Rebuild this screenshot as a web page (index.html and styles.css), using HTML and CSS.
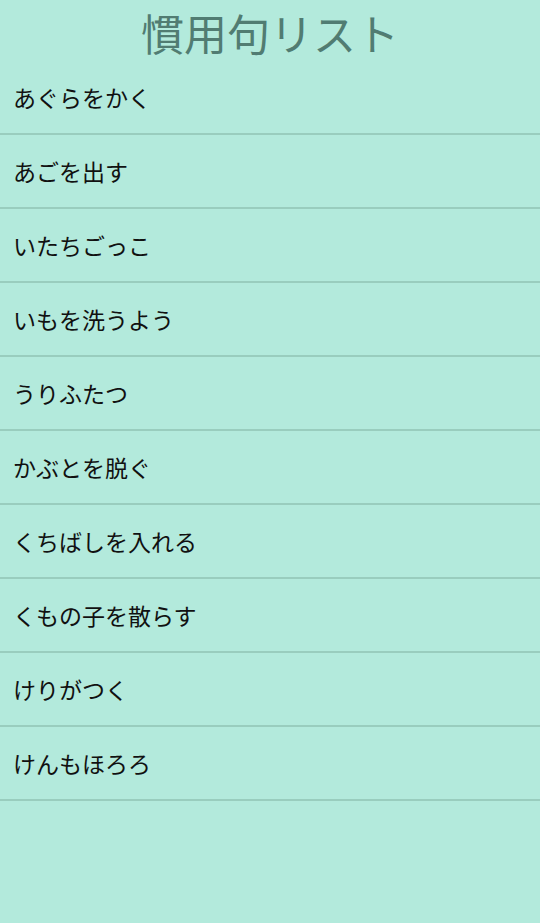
FILE: index.html
```html
<!DOCTYPE html>
<html lang="ja">
<head>
<meta charset="utf-8">
<link rel="stylesheet" href="styles.css">
</head>
<body>
<h1 class="title">慣用句リスト</h1>
<ul class="list">
<li class="item">あぐらをかく</li>
<li class="item">あごを出す</li>
<li class="item">いたちごっこ</li>
<li class="item">いもを洗うよう</li>
<li class="item">うりふたつ</li>
<li class="item">かぶとを脱ぐ</li>
<li class="item">くちばしを入れる</li>
<li class="item">くもの子を散らす</li>
<li class="item">けりがつく</li>
<li class="item">けんもほろろ</li>
</ul>
</body>
</html>
```
FILE: styles.css
```css
html, body {
  margin: 0;
  padding: 0;
  background: #b3eadc;
  min-height: 100%;
}
body {
  font-family: "Noto Sans CJK JP", "Noto Sans", sans-serif;
  width: 540px;
  height: 923px;
}
.title {
  margin: 0;
  height: 61px;
  line-height: 64px;
  text-align: center;
  font-size: 43px;
  font-weight: 400;
  color: #517c72;
}
.list {
  list-style: none;
  margin: 0;
  padding: 0;
}
.item {
  height: 72px;
  line-height: 72px;
  padding-left: 13px;
  font-size: 23px;
  color: #111;
  border-bottom: 2px solid #99cdbe;
}
```
